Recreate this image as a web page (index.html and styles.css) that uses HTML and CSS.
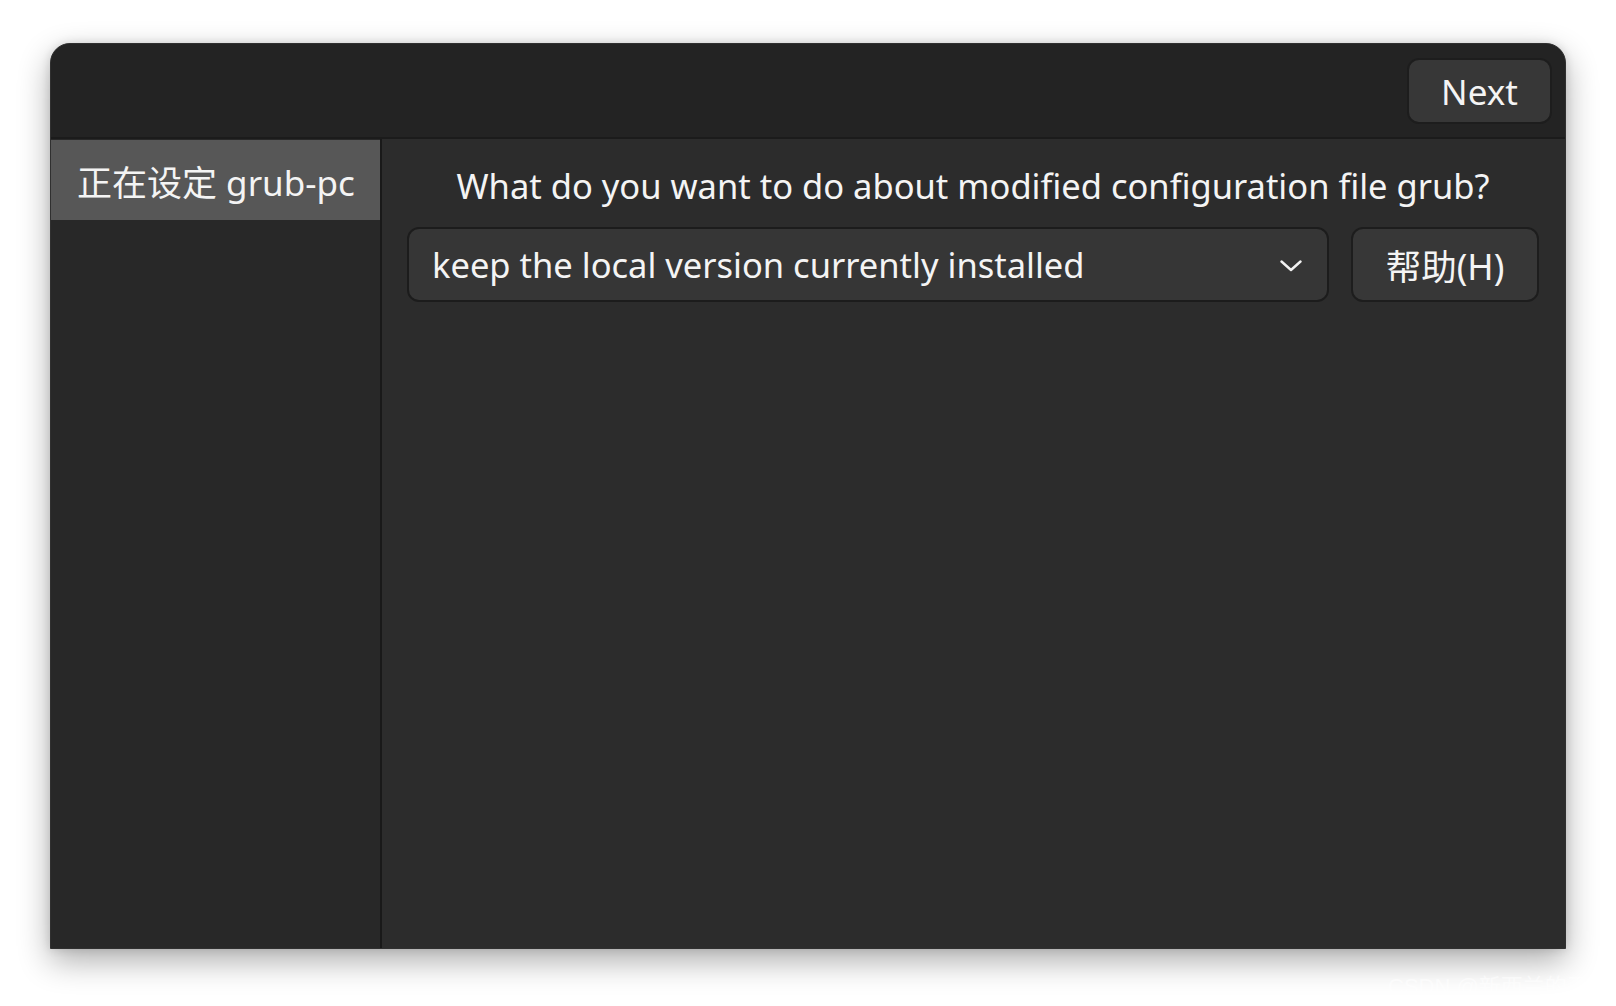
FILE: index.html
```html
<!DOCTYPE html>
<html lang="zh">
<head>
<meta charset="utf-8">
<title>grub-pc</title>
<link rel="stylesheet" href="styles.css">
</head>
<body>
<div class="window">
  <header class="headerbar">
    <button class="btn next">Next</button>
  </header>
  <div class="main">
    <aside class="sidebar">
      <div class="side-item selected">正在设定 grub-pc</div>
    </aside>
    <section class="content">
      <p class="question">What do you want to do about modified configuration file grub?</p>
      <div class="row">
        <div class="combo">
          <span class="combo-text">keep the local version currently installed</span>
          <svg class="chevron" width="22" height="12" viewBox="0 0 22 12"><path d="M1.5 1.5 L11 10 L20.5 1.5" fill="none" stroke="#f2f2f2" stroke-width="2.4" stroke-linecap="round" stroke-linejoin="round"/></svg>
        </div>
        <button class="btn help">帮助(H)</button>
      </div>
    </section>
  </div>
</div>
<div class="watermark">CSDN @新西兰的王宇</div>
</body>
</html>
```

FILE: styles.css
```css
html, body {
  margin: 0;
  padding: 0;
  background: #ffffff;
  width: 1616px;
  height: 1006px;
  overflow: hidden;
  font-family: "Noto Sans", "Noto Sans CJK SC", sans-serif;
  color: #f4f4f4;
}

.window {
  margin: 43px 0 0 50px;
  width: 1516px;
  height: 906px;
  box-sizing: border-box;
  border: 1px solid #303030;
  border-radius: 20px 20px 0 0;
  background: #2c2c2c;
  display: flex;
  flex-direction: column;
  overflow: hidden;
  box-shadow: 0 12px 32px rgba(0, 0, 0, 0.32), 0 0 10px rgba(0, 0, 0, 0.12);
}

.headerbar {
  height: 95px;
  flex: none;
  background: #232323;
  border-bottom: 2px solid #1b1b1b;
  display: flex;
  justify-content: flex-end;
  align-items: flex-start;
  padding: 14px 13px 0 0;
  box-sizing: border-box;
}

.btn {
  font-family: "Noto Sans", "Noto Sans CJK SC", sans-serif;
  color: #f4f4f4;
  background: #373737;
  border: 2px solid #1d1d1d;
  border-radius: 12px;
  box-sizing: border-box;
  padding: 0;
  margin: 0;
}

.next {
  width: 145px;
  height: 66px;
  font-size: 35px;
}

.main {
  flex: 1;
  display: flex;
  min-height: 0;
}

.sidebar {
  width: 331px;
  flex: none;
  background: #282828;
  border-right: 2px solid #191919;
  box-sizing: border-box;
  padding-top: 1px;
}

.side-item {
  height: 80px;
  display: flex;
  align-items: center;
  padding-left: 26px;
  font-size: 35px;
  white-space: nowrap;
}

.side-item.selected {
  background: #575757;
}

.content {
  flex: 1;
  background: #2c2c2c;
  padding: 25px 26px 0 25px;
  display: flex;
  flex-direction: column;
}

.question {
  margin: 0;
  text-align: center;
  font-size: 34.5px;
  line-height: 44px;
  white-space: nowrap;
}

.row {
  margin-top: 19px;
  display: flex;
  gap: 22px;
  height: 75px;
}

.combo {
  flex: 1;
  background: #363636;
  border: 2px solid #1c1c1c;
  border-radius: 12px;
  display: flex;
  align-items: center;
  justify-content: space-between;
  padding: 0 25px 0 23px;
  box-sizing: border-box;
}

.combo-text {
  font-size: 34.5px;
  white-space: nowrap;
}

.chevron {
  display: block;
  margin-top: 2px;
}

.help {
  width: 188px;
  height: 75px;
  font-size: 35.5px;
}

.watermark {
  position: absolute;
  left: 1388px;
  top: 968px;
  font-family: "Liberation Sans", "Noto Sans CJK SC", sans-serif;
  font-size: 22px;
  color: rgba(255, 255, 255, 0.55);
  white-space: nowrap;
}
```
